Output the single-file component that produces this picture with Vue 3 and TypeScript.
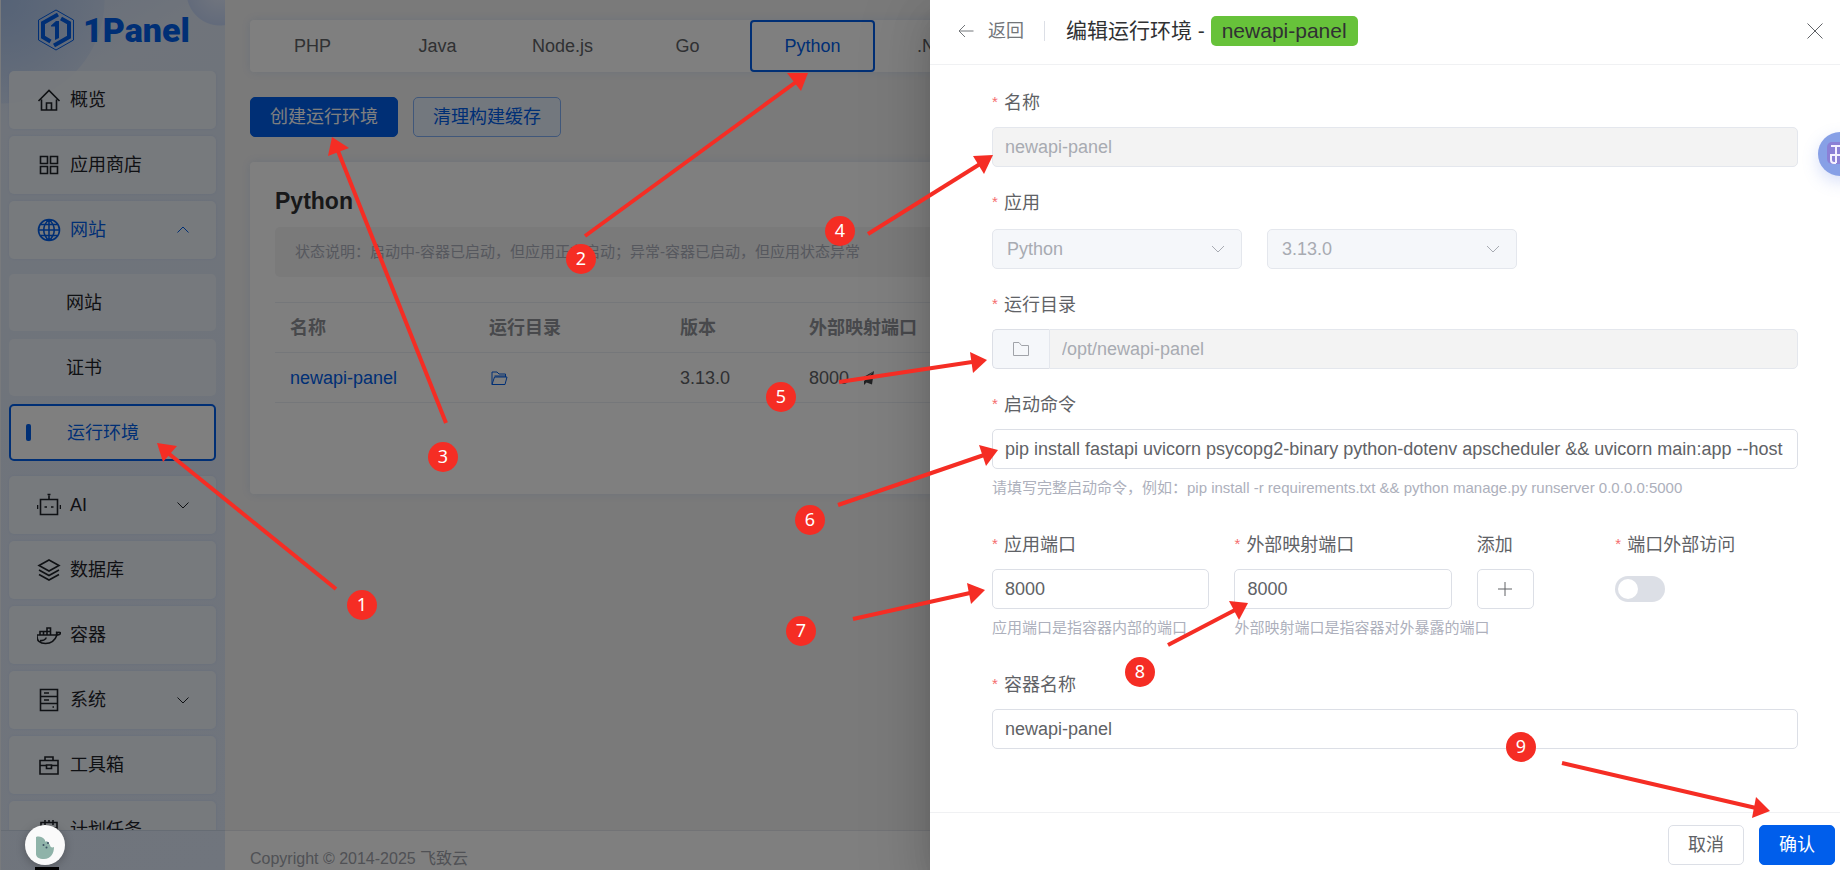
<script setup lang="ts">
import { ref } from 'vue'

interface MenuItem {
  label: string
  icon: string
  chevron?: 'up' | 'down'
  active?: boolean
  children?: { label: string; current?: boolean }[]
}

const icons: Record<string, string> = {
  home: 'M1.5 13 12 2.5 22.5 13M4.5 11.5V22h15V11.5M9.5 22v-7h5v7',
  grid: 'M3.5 3.5h7v7h-7zM13.5 3.5h7v7h-7zM3.5 13.5h7v7h-7zM13.5 13.5h7v7h-7z',
  globe:
    'M12 1.5a10.5 10.5 0 1 0 0 21a10.5 10.5 0 1 0 0-21zM12 1.5v21M1.5 12h21M3.5 6.5h17M3.5 17.5h17M12 1.5c-7 6-7 15 0 21M12 1.5c7 6 7 15 0 21',
  robot: 'M3.5 6.5h17v15h-17zM12 2.5v4M10.5 1.5h3M.5 12v4M23.5 12v4M7.5 14h2.500M14 14h2.500',
  layers: 'M12 2 22 7.5 12 13 2 7.5zM2 12l10 5.5L22 12M2 16.5 12 22l10-5.5',
  whale:
    'M0 12h18.500c1 0 1.500-1 1-3.500M0 12c-.5 6 3 8.500 8.500 8.500 6 0 9.500-3 11.500-8.500M20 12c2 0 3-.5 4-2-1.500-1-3-.8-4 .2M3 12V8.500h3.500V12M6.500 8.500H10V12M10 8.500h3.500V12M13.500 8.500V5H10v3.500M3 17.500c2 .5 4.500-.5 6-2M9 14.500v1',
  server: 'M3.500 1.500h17v21h-17zM3.500 8.500h17M3.500 15.500h17M7 5h5M7 12h5M15.500 19h1.500',
  toolbox: 'M3 7.500h18v13.500H3zM8 7.500V4h8v3.500M3 12.500h6.500M14.500 12.500H21M9.500 12h5v3.500h-5z',
  calendar: 'M4 4.500h16V22H4zM8 2v5M16 2v5M4 10h16M12 2v3'
}

const menu: MenuItem[] = [
  { label: '概览', icon: 'home' },
  { label: '应用商店', icon: 'grid' },
  {
    label: '网站',
    icon: 'globe',
    chevron: 'up',
    active: true,
    children: [{ label: '网站' }, { label: '证书' }, { label: '运行环境', current: true }]
  },
  { label: 'AI', icon: 'robot', chevron: 'down' },
  { label: '数据库', icon: 'layers' },
  { label: '容器', icon: 'whale' },
  { label: '系统', icon: 'server', chevron: 'down' },
  { label: '工具箱', icon: 'toolbox' },
  { label: '计划任务', icon: 'calendar' }
]

const tabs = ['PHP', 'Java', 'Node.js', 'Go', 'Python', '.NET']

const name = ref('newapi-panel')
const dir = ref('/opt/newapi-panel')
const command = ref(
  'pip install fastapi uvicorn psycopg2-binary python-dotenv apscheduler && uvicorn main:app --host'
)
const appPort = ref('8000')
const hostPort = ref('8000')
const container = ref('newapi-panel')
const external = ref(false)

interface Mark {
  n: number
  cx: number
  cy: number
  line: string
  head: string
}

const marks: Mark[] = [
  { n: 1, cx: 362, cy: 605, line: 'M336 589 168 453', head: '157,443 177,446 163,462' },
  { n: 2, cx: 581, cy: 259, line: 'M585 236 796 82', head: '808,73 787,73 801,91' },
  { n: 3, cx: 443, cy: 457, line: 'M446 423 338 151', head: '332,137 349,148 328,156' },
  { n: 4, cx: 840, cy: 231, line: 'M868 234 980 164', head: '993,155 973,156 984,174' },
  { n: 5, cx: 781, cy: 397, line: 'M839 382 972 362', head: '987,360 970,352 973,373' },
  { n: 6, cx: 810, cy: 520, line: 'M838 505 984 455', head: '998,450 979,445 986,466' },
  { n: 7, cx: 801, cy: 631, line: 'M853 619 970 593', head: '985,590 967,583 971,604' },
  { n: 8, cx: 1140, cy: 672, line: 'M1168 645 1235 610', head: '1248,603 1229,601 1239,620' },
  { n: 9, cx: 1521, cy: 747, line: 'M1562 763 1756 808', head: '1770,811 1756,797 1752,818' }
]
</script>

<template>
  <div class="page">
    <aside class="sidebar">
      <div class="brand">
        <svg width="38" height="42" viewBox="0 0 38 42" fill="none" aria-hidden="true">
          <path d="M19 1 36.500 11v20L19 41 1.500 31V11z" stroke="#005eeb" />
          <path d="M21 5.500 6 14v14l7.500 4.500M24 9.500 32 14v14L17 36.500" stroke="#005eeb" stroke-width="4" />
          <path d="M14 16.500 19 12h3v17l-4 2V17.500h-4z" fill="#005eeb" />
        </svg>
        <span class="brand-name">1Panel</span>
      </div>
      <nav class="menu">
        <template v-for="item in menu" :key="item.label">
          <a href="#" class="item" :class="{ active: item.active }">
            <svg class="icon" width="24" height="24" viewBox="0 0 24 24" aria-hidden="true">
              <path :d="icons[item.icon]" />
            </svg>
            <span class="item-label">{{ item.label }}</span>
            <svg v-if="item.chevron" class="chevron" width="14" height="14" viewBox="0 0 14 14" aria-hidden="true">
              <path :d="item.chevron === 'up' ? 'M1.500 9.500 7 4l5.500 5.500' : 'M1.500 4.500 7 10l5.500-5.500'" />
            </svg>
          </a>
          <div v-if="item.children" class="submenu">
            <a v-for="sub in item.children" :key="sub.label" href="#" class="subitem" :class="{ current: sub.current }">
              {{ sub.label }}
            </a>
          </div>
        </template>
      </nav>
      <div class="sidebar-foot"></div>
    </aside>

    <div class="content">
      <main class="main">
        <div class="tabs">
          <button v-for="tab in tabs" :key="tab" type="button" class="tab" :class="{ selected: tab === 'Python' }">
            {{ tab }}
          </button>
        </div>
        <div class="actions">
          <button type="button" class="btn primary">创建运行环境</button>
          <button type="button" class="btn plain">清理构建缓存</button>
        </div>
        <section class="card">
          <h2 class="card-title">Python</h2>
          <p class="notice">状态说明：启动中-容器已启动，但应用正在启动；异常-容器已启动，但应用状态异常</p>
          <table class="table">
            <colgroup>
              <col class="c-name" />
              <col class="c-dir" />
              <col class="c-version" />
              <col />
            </colgroup>
            <thead>
              <tr>
                <th>名称</th>
                <th>运行目录</th>
                <th>版本</th>
                <th>外部映射端口</th>
              </tr>
            </thead>
            <tbody>
              <tr>
                <td><a href="#" class="link">newapi-panel</a></td>
                <td>
                  <button type="button" class="icon-btn" aria-label="打开目录">
                    <svg width="20" height="18" viewBox="0 0 20 18" fill="none" stroke="#005eeb">
                      <path d="M3 15.500V3h5l2 2h6.500v3M3 15.500h13L18 8H5.500zM5.500 7H17" />
                    </svg>
                  </button>
                </td>
                <td>3.13.0</td>
                <td>
                  <span class="port">
                    8000
                    <svg width="14" height="16" viewBox="0 0 14 16" fill="#404347" aria-hidden="true">
                      <path d="M14 1 1 8.500l2.500 1.500zM14 1 4 11v4l2.500-2.500L12 14.500z" />
                    </svg>
                  </span>
                </td>
              </tr>
            </tbody>
          </table>
        </section>
      </main>
      <footer class="footer">Copyright © 2014-2025 飞致云</footer>
    </div>

    <div class="mask"></div>

    <div class="drawer" role="dialog" aria-label="编辑运行环境">
      <header class="drawer-head">
        <button type="button" class="back">
          <svg width="16" height="16" viewBox="0 0 16 16" fill="none" stroke="#73767a" aria-hidden="true">
            <path d="M15.500 8H1M7 2 1 8l6 6" />
          </svg>
          返回
        </button>
        <span class="divider"></span>
        <h1 class="title">编辑运行环境 - <span class="tag">newapi-panel</span></h1>
        <button type="button" class="close" aria-label="关闭">
          <svg width="16" height="16" viewBox="0 0 16 16" fill="none" stroke="#606266">
            <path d="M.5.5l15 15M15.500.5l-15 15" />
          </svg>
        </button>
      </header>

      <form class="form">
        <div class="field">
          <label class="label required" for="f-name">名称</label>
          <input id="f-name" v-model="name" class="input" disabled />
        </div>

        <div class="field roomy">
          <label class="label required" for="f-app">应用</label>
          <div class="selects">
            <div class="select">
              <select id="f-app" disabled>
                <option>Python</option>
              </select>
              <svg width="14" height="14" viewBox="0 0 14 14" aria-hidden="true">
                <path d="M1 4l6 6 6-6" />
              </svg>
            </div>
            <div class="select">
              <select aria-label="版本" disabled>
                <option>3.13.0</option>
              </select>
              <svg width="14" height="14" viewBox="0 0 14 14" aria-hidden="true">
                <path d="M1 4l6 6 6-6" />
              </svg>
            </div>
          </div>
        </div>

        <div class="field">
          <label class="label required" for="f-dir">运行目录</label>
          <div class="group">
            <button type="button" class="prepend" aria-label="选择目录" disabled>
              <svg width="18" height="16" viewBox="0 0 18 16" fill="none" stroke="#a0a3a9">
                <path d="M1.500 1.500H7l2.500 3h7v10h-15z" />
              </svg>
            </button>
            <input id="f-dir" v-model="dir" class="input" disabled />
          </div>
        </div>

        <div class="field">
          <label class="label required" for="f-cmd">启动命令</label>
          <input id="f-cmd" v-model="command" class="input" />
          <p class="hint">请填写完整启动命令，例如：pip install -r requirements.txt &amp;&amp; python manage.py runserver 0.0.0.0:5000</p>
        </div>

        <div class="ports">
          <div class="field">
            <label class="label required" for="f-port">应用端口</label>
            <input id="f-port" v-model="appPort" class="input" />
            <p class="hint">应用端口是指容器内部的端口</p>
          </div>
          <div class="field">
            <label class="label required" for="f-host">外部映射端口</label>
            <input id="f-host" v-model="hostPort" class="input" />
            <p class="hint">外部映射端口是指容器对外暴露的端口</p>
          </div>
          <div class="field">
            <label class="label" for="f-add">添加</label>
            <button id="f-add" type="button" class="add">
              <svg width="14" height="14" viewBox="0 0 14 14" fill="none" stroke="#606266" aria-hidden="true">
                <path d="M7 0v14M0 7h14" />
              </svg>
            </button>
          </div>
          <div class="field">
            <label class="label required" for="f-ext">端口外部访问</label>
            <div class="switch-row">
              <input id="f-ext" v-model="external" type="checkbox" role="switch" class="switch" />
            </div>
          </div>
        </div>

        <div class="field">
          <label class="label required" for="f-container">容器名称</label>
          <input id="f-container" v-model="container" class="input" />
        </div>
      </form>

      <footer class="drawer-foot">
        <button type="button" class="btn">取消</button>
        <button type="button" class="btn primary">确认</button>
      </footer>
    </div>

    <button type="button" class="float-right" aria-label="翻译">
      <svg width="44" height="44" viewBox="0 0 44 44" fill="none" aria-hidden="true">
        <rect x="9" y="10" width="26" height="22" rx="5" fill="#8b80d6" />
        <path d="M13 14h18M18 14v17M12 23h20M13 23v5q0 3 3 3h2M25 14v17" stroke="#f4f1ff" stroke-width="2" />
      </svg>
    </button>

    <div class="float-shadow"></div>
    <button type="button" class="float-left" aria-label="Cookie">
      <svg width="40" height="40" viewBox="0 0 40 40" aria-hidden="true">
        <path d="M11 12c3-1 6-.5 9 3 0 2 1 2 2 1l3 4c0 2 2 3 4 2 0 6-3 12-10 12-5 0-8-2-8-5z" fill="#8fb3a9" />
        <g fill="#3c5063">
          <circle cx="18.500" cy="20" r="1" />
          <circle cx="23" cy="18" r="1" />
          <circle cx="21.500" cy="22.500" r="1" />
        </g>
      </svg>
    </button>

    <svg class="marks" aria-hidden="true">
      <g v-for="m in marks" :key="m.n">
        <path :d="m.line" />
        <polygon :points="m.head" />
        <circle :cx="m.cx" :cy="m.cy" r="15" />
        <text :x="m.cx" :y="m.cy + 6">{{ m.n }}</text>
      </g>
    </svg>
  </div>
</template>

<style>
body {
  margin: 0;
  overflow: hidden;
}
</style>

<style scoped>
* {
  box-sizing: border-box;
}

.page {
  position: relative;
  display: flex;
  height: 100vh;
  overflow: hidden;
  background: #f4f4f4;
  color: #606266;
  font: 18px/28px 'Liberation Sans', 'Noto Sans CJK SC', sans-serif;
}

button,
input,
select {
  margin: 0;
  font: inherit;
  color: inherit;
}

a {
  color: inherit;
  text-decoration: none;
}

.sidebar {
  display: flex;
  flex: 0 0 225px;
  flex-direction: column;
  border-left: 1px solid #f0f4fa;
  background:
    radial-gradient(circle at 219px -8px, #e6eefe 0, #c6d6f6 33px, transparent 34px),
    radial-gradient(circle at 0 0, #acc6ee 0, rgba(196, 214, 244, 0.5) 103px, transparent 104px),
    linear-gradient(150deg, #cddcf4 0, #e0e9f7 110px, #dfe8f6 170px, #e0eafa 100%);
}

.brand {
  display: flex;
  align-items: center;
  gap: 8px;
  height: 59px;
  padding-left: 36px;
  margin-bottom: 12px;
}

.brand-name {
  color: #005eeb;
  font: 900 34px/40px Roboto, 'Liberation Sans', sans-serif;
}

.menu {
  display: flex;
  flex: 1;
  flex-direction: column;
  gap: 7px;
  min-height: 0;
  padding: 0 9px 0 8px;
  overflow: hidden;
}

.item {
  display: flex;
  flex: 0 0 58px;
  align-items: center;
  gap: 9px;
  padding: 0 26px 0 28px;
  border-radius: 5px;
  background: rgba(240, 245, 251, 0.9);
  box-shadow: 0 0 3px rgba(0, 94, 235, 0.08);
  color: #1f2329;
}

.item.active {
  color: #005eeb;
}

.icon {
  fill: none;
  stroke: currentColor;
  stroke-width: 1.600;
}

.item-label {
  flex: 1;
}

.chevron {
  fill: none;
  stroke: currentColor;
}

.submenu {
  display: flex;
  flex: none;
  flex-direction: column;
  gap: 8px;
  padding: 8px 0;
}

.subitem {
  display: flex;
  align-items: center;
  height: 57px;
  padding-left: 57px;
  border-radius: 5px;
  background: rgba(240, 245, 251, 0.8);
  color: #1f2329;
}

.subitem.current {
  padding-left: 15px;
  border: 2px solid #005eeb;
  background: #fff;
  color: #005eeb;
}

.subitem.current::before {
  width: 5px;
  height: 17px;
  margin-right: 36px;
  border-radius: 2px;
  background: #005eeb;
  content: '';
}

.sidebar-foot {
  flex: 0 0 40px;
  border-top: 1px solid #cdd8e8;
}

.content {
  display: flex;
  flex: 1;
  flex-direction: column;
  min-width: 0;
}

.main {
  flex: 1;
  padding: 20px 25px 0;
}

.tabs {
  display: flex;
  height: 52px;
  border-radius: 4px;
  background: #fff;
  box-shadow: 0 0 10px rgba(0, 94, 235, 0.1);
}

.tab {
  width: 125px;
  padding: 0;
  border: 2px solid transparent;
  border-radius: 4px;
  background: none;
}

.tab.selected {
  border-color: #005eeb;
  color: #005eeb;
}

.actions {
  display: flex;
  gap: 15px;
  margin: 25px 0;
}

.btn {
  height: 40px;
  padding: 0 19px;
  border: 1px solid #dcdfe6;
  border-radius: 5px;
  background: #fff;
}

.btn.primary {
  border-color: #005eeb;
  background: #005eeb;
  color: #fff;
}

.btn.plain {
  border-color: #80aff5;
  background: #e6f0fd;
  color: #005eeb;
}

.card {
  height: 332px;
  padding: 25px;
  border-radius: 4px;
  background: #fff;
  box-shadow: 0 0 10px rgba(0, 94, 235, 0.1);
}

.card-title {
  margin: 0 0 12px;
  color: #303133;
  font-size: 23px;
  line-height: 28px;
}

.notice {
  margin: 0 0 25px;
  padding: 0 20px;
  border-radius: 5px;
  background: #f4f4f5;
  color: #adb0bc;
  font-size: 15px;
  line-height: 50px;
  white-space: nowrap;
}

.table {
  width: 100%;
  border-top: 1px solid #ebeef5;
  border-collapse: separate;
  border-spacing: 0;
  table-layout: fixed;
}

.c-name {
  width: 199px;
}

.c-dir {
  width: 191px;
}

.c-version {
  width: 129px;
}

.table th,
.table td {
  height: 50px;
  padding: 0 15px;
  border-bottom: 1px solid #ebeef5;
  text-align: left;
}

.table th {
  color: #909399;
  font-weight: 700;
}

.link {
  color: #005eeb;
}

.icon-btn {
  display: block;
  padding: 0;
  border: 0;
  background: none;
}

.icon-btn svg {
  display: block;
}

.port {
  display: flex;
  align-items: center;
  gap: 11px;
}

.footer {
  height: 40px;
  padding-left: 25px;
  border-top: 1px solid #e4e7ed;
  background: #fff;
  color: #a0a3ab;
  font-size: 16px;
  line-height: 55px;
}

.mask {
  position: absolute;
  inset: 0;
  background: rgba(0, 0, 0, 0.5);
}

.drawer {
  position: absolute;
  inset: 0 0 0 auto;
  display: flex;
  flex-direction: column;
  width: calc(50% - 10px);
  background: #fff;
  box-shadow:
    0 20px 60px 20px rgba(0, 0, 0, 0.08),
    0 15px 40px rgba(0, 0, 0, 0.12),
    0 10px 20px -10px rgba(0, 0, 0, 0.16);
}

.drawer-head {
  display: flex;
  flex: 0 0 65px;
  align-items: center;
  padding: 0 17px 3px 28px;
  border-bottom: 1px solid #f0f1f3;
}

.back {
  display: flex;
  align-items: center;
  gap: 14px;
  padding: 0;
  border: 0;
  background: none;
  color: #73767a;
}

.divider {
  width: 1px;
  height: 20px;
  margin: 0 21px 0 20px;
  background: #dcdfe6;
}

.title {
  flex: 1;
  margin: 0;
  color: #303133;
  font-weight: 400;
  font-size: 21px;
  line-height: 30px;
}

.tag {
  display: inline-block;
  padding: 0 11px;
  border-radius: 5px;
  background: #67c23a;
}

.close {
  padding: 0;
  border: 0;
  background: none;
}

.close svg {
  display: block;
}

.form {
  flex: 1;
  padding: 24px 42px 0 62px;
}

.field {
  display: flex;
  flex-direction: column;
  align-items: stretch;
  gap: 10px;
  margin-bottom: 22px;
}

.roomy {
  gap: 12px;
}

.label {
  display: flex;
  line-height: 28px;
  white-space: nowrap;
}

.required::before {
  width: 12px;
  color: #f56c6c;
  font-size: 15px;
  line-height: 26px;
  content: '*';
}

.input,
.select select {
  width: 100%;
  min-width: 0;
  height: 40px;
  padding: 0 12px;
  border: 1px solid #dcdfe6;
  border-radius: 5px;
  background: #fff;
}

.input:disabled {
  border-color: #e4e7ed;
  background: #f3f3f3;
  color: #a8abb2;
}

.selects {
  display: flex;
  gap: 25px;
}

.select {
  position: relative;
  width: 250px;
}

.select select {
  display: block;
  padding: 0 14px;
  border-color: #e4e7ed;
  background: #f5f7fa;
  color: #a8abb2;
  opacity: 1;
  appearance: none;
}

.select svg {
  position: absolute;
  top: 13px;
  right: 17px;
  fill: none;
  stroke: #a8abb2;
}

.group {
  display: flex;
}

.prepend {
  display: flex;
  flex: 0 0 57px;
  align-items: center;
  justify-content: center;
  border: 1px solid #dcdfe6;
  border-right: 0;
  border-radius: 5px 0 0 5px;
  background: #f5f7fa;
}

.group .input {
  border-radius: 0 5px 5px 0;
}

.hint {
  margin: -2px 0 10px;
  color: #adb0bc;
  font-size: 15px;
  line-height: 22px;
  white-space: nowrap;
}

.ports {
  display: grid;
  grid-template-columns: 7fr 7fr 4fr 6fr;
  margin-right: -25px;
}

.ports .field {
  min-width: 0;
  padding-right: 25px;
}

.add {
  display: flex;
  align-items: center;
  justify-content: center;
  width: 57px;
  height: 40px;
  border: 1px solid #dcdfe6;
  border-radius: 5px;
  background: #fff;
}

.switch-row {
  display: flex;
  align-items: center;
  height: 40px;
}

.switch {
  width: 50px;
  height: 26px;
  margin: 0;
  padding: 3px;
  border-radius: 13px;
  background: #dcdfe6;
  appearance: none;
}

.switch::before {
  display: block;
  width: 20px;
  height: 20px;
  border-radius: 50%;
  background: #fff;
  content: '';
}

.switch:checked {
  background: #005eeb;
}

.switch:checked::before {
  margin-left: auto;
}

.drawer-foot {
  display: flex;
  gap: 15px;
  justify-content: flex-end;
  padding: 12px 5px 5px;
  border-top: 1px solid #f0f1f3;
}

.float-right {
  position: absolute;
  top: 132px;
  right: -22px;
  width: 44px;
  height: 44px;
  padding: 0;
  border: 0;
  border-radius: 50%;
  background: #87a0e6;
  box-shadow: 0 6px 16px rgba(100, 130, 230, 0.25);
}

.float-left {
  position: absolute;
  bottom: 5px;
  left: 25px;
  width: 40px;
  height: 40px;
  padding: 0;
  border: 0;
  border-radius: 50%;
  background: #fafafa;
  box-shadow: 0 2px 10px rgba(0, 0, 0, 0.25);
}

.float-shadow {
  position: absolute;
  bottom: 0;
  left: 35px;
  width: 24px;
  height: 3px;
  background: #000;
}

.marks {
  position: absolute;
  inset: 0;
  width: 100%;
  height: 100%;
  pointer-events: none;
}

.marks path {
  fill: none;
  stroke: #f52d24;
  stroke-width: 4;
}

.marks polygon,
.marks circle {
  fill: #f52d24;
}

.marks text {
  fill: #fff;
  font: 18px 'Noto Sans', sans-serif;
  text-anchor: middle;
}
</style>
